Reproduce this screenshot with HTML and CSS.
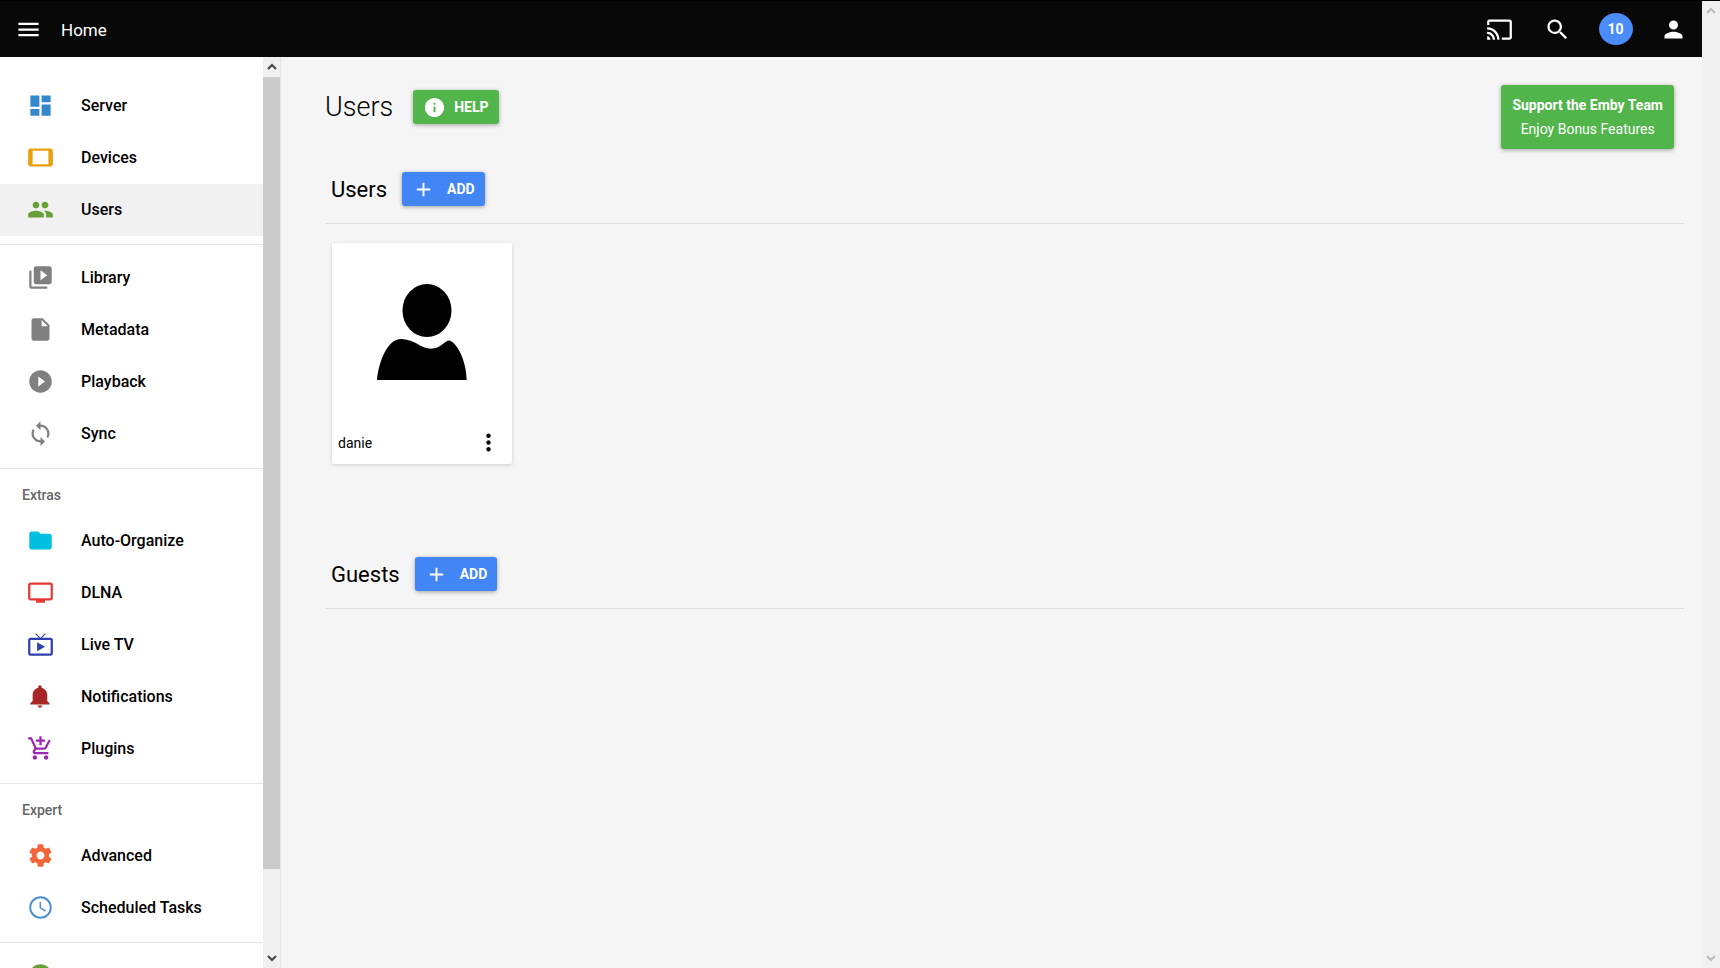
FILE: index.html
```
<!DOCTYPE html>
<html lang="en">
<head>
    <meta charset="UTF-8">
    <meta name="viewport" content="width=device-width, initial-scale=1.0">
    <title>Users</title>
    <link rel="stylesheet" href="styles.css">
</head>
<body>
    <div class="app">
        <header class="topbar">
            <button class="iconbtn" aria-label="Menu"><svg class="icon" viewBox="0 0 24 24"><path d="M3 18h18v-2H3v2zm0-5h18v-2H3v2zm0-7v2h18V6H3z"/></svg></button>
            <a class="title" href="#">Home</a>
            <div class="actions">
                <button class="iconbtn" aria-label="Cast"><svg class="icon" viewBox="0 0 24 24"><path d="M21 3H3c-1.100 0-2 .9-2 2v3h2V5h18v14h-7v2h7c1.100 0 2-.9 2-2V5c0-1.100-.9-2-2-2zM1 18v3h3c0-1.660-1.340-3-3-3zm0-4v2c2.760 0 5 2.240 5 5h2c0-3.870-3.130-7-7-7zm0-4v2c4.970 0 9 4.030 9 9h2c0-6.080-4.930-11-11-11z"/></svg></button>
                <button class="iconbtn" aria-label="Search"><svg class="icon" viewBox="0 0 24 24"><path d="M15.500 14h-.79l-.28-.27A6.471 6.471 0 0 0 16 9.500 6.500 6.500 0 1 0 9.500 16c1.610 0 3.090-.59 4.230-1.570l.27.28v.79l5 4.990L20.490 19l-4.990-5zm-6 0C7.010 14 5 11.990 5 9.500S7.010 5 9.500 5 14 7.010 14 9.500 11.990 14 9.500 14z"/></svg></button>
                <button class="iconbtn"><span class="count">10</span></button>
                <button class="iconbtn" aria-label="Profile"><svg class="icon" viewBox="0 0 24 24"><path d="M12 12c2.210 0 4-1.790 4-4s-1.790-4-4-4-4 1.790-4 4 1.790 4 4 4zm0 2c-2.670 0-8 1.340-8 4v2h16v-2c0-2.660-5.330-4-8-4z"/></svg></button>
            </div>
        </header>

        <div class="body">
            <nav class="sidebar">
                <a class="item server" href="#"><svg class="icon" viewBox="0 0 24 24"><path d="M3 13h8V3H3v10zm0 8h8v-6H3v6zm10 0h8V11h-8v10zm0-18v6h8V3h-8z"/></svg>Server</a>
                <a class="item devices" href="#"><svg class="icon" viewBox="0 0 24 24"><path d="M21 4H3c-1.100 0-2 .9-2 2v12c0 1.100.9 2 2 2h18c1.100 0 2-.9 2-2V6c0-1.100-.9-2-2-2zm-2 14H5V6h14v12z"/></svg>Devices</a>
                <a class="item users active" href="#"><svg class="icon" viewBox="0 0 24 24"><path d="M16 11c1.660 0 2.990-1.340 2.990-3S17.660 5 16 5s-3 1.340-3 3 1.340 3 3 3zm-8 0c1.660 0 2.990-1.340 2.990-3S9.660 5 8 5 5 6.340 5 8s1.340 3 3 3zm0 2c-2.330 0-7 1.170-7 3.500V19h14v-2.500c0-2.330-4.670-3.500-7-3.500zm8 0c-.29 0-.62.020-.97.050 1.160.84 1.970 1.970 1.970 3.450V19h6v-2.500c0-2.330-4.670-3.500-7-3.500z"/></svg>Users</a>
                <hr>
                <a class="item" href="#"><svg class="icon" viewBox="0 0 24 24"><path d="M4 6H2v14c0 1.100.9 2 2 2h14v-2H4V6zm16-4H8c-1.100 0-2 .9-2 2v12c0 1.100.9 2 2 2h12c1.100 0 2-.9 2-2V4c0-1.100-.9-2-2-2zm-8 12.500v-9l6 4.500-6 4.500z"/></svg>Library</a>
                <a class="item" href="#"><svg class="icon" viewBox="0 0 24 24"><path d="M6 2c-1.100 0-1.990.9-1.990 2L4 20c0 1.100.89 2 1.990 2H18c1.100 0 2-.9 2-2V8l-6-6H6zm7 7V3.500L18.500 9H13z"/></svg>Metadata</a>
                <a class="item" href="#"><svg class="icon" viewBox="0 0 24 24"><path d="M12 2C6.480 2 2 6.480 2 12s4.480 10 10 10 10-4.480 10-10S17.520 2 12 2zm-2 14.500v-9l6 4.500-6 4.500z"/></svg>Playback</a>
                <a class="item" href="#"><svg class="icon" viewBox="0 0 24 24"><path d="M12 4V1L8 5l4 4V6c3.310 0 6 2.690 6 6 0 1.010-.25 1.970-.7 2.800l1.460 1.460A7.930 7.930 0 0 0 20 12c0-4.420-3.580-8-8-8zm0 14c-3.310 0-6-2.690-6-6 0-1.010.25-1.970.7-2.800L5.240 7.740A7.930 7.930 0 0 0 4 12c0 4.420 3.580 8 8 8v3l4-4-4-4v3z"/></svg>Sync</a>
                <hr>
                <h3>Extras</h3>
                <a class="item organize" href="#"><svg class="icon" viewBox="0 0 24 24"><path d="M10 4H4c-1.100 0-1.990.9-1.990 2L2 18c0 1.100.9 2 2 2h16c1.100 0 2-.9 2-2V8c0-1.100-.9-2-2-2h-8l-2-2z"/></svg>Auto-Organize</a>
                <a class="item dlna" href="#"><svg class="icon" viewBox="0 0 24 24"><path d="M21 3H3c-1.100 0-2 .9-2 2v12c0 1.100.9 2 2 2h5v2h8v-2h5c1.100 0 1.990-.9 1.990-2L23 5c0-1.100-.9-2-2-2zm0 14H3V5h18v12z"/></svg>DLNA</a>
                <a class="item livetv" href="#"><svg class="icon" viewBox="0 0 24 24"><path d="M21 6h-7.590l3.290-3.290L16 2l-4 4-4-4-.7.71L10.590 6H3c-1.100 0-2 .89-2 2v12c0 1.100.9 2 2 2h18c1.100 0 2-.9 2-2V8c0-1.110-.9-2-2-2zm0 14H3V8h18v12zM9 10v8l7-4z"/></svg>Live TV</a>
                <a class="item notify" href="#"><svg class="icon" viewBox="0 0 24 24"><path d="M11.500 22c1.100 0 2-.9 2-2h-4c0 1.100.9 2 2 2zm6.500-6v-5.500c0-3.070-2.130-5.640-5-6.320V3.500c0-.83-.67-1.500-1.500-1.500S10 2.670 10 3.500v.68c-2.870.68-5 3.250-5 6.320V16l-2 2v1h17v-1l-2-2z"/></svg>Notifications</a>
                <a class="item plugins" href="#"><svg class="icon" viewBox="0 0 24 24"><path d="M11 9h2V6h3V4h-3V1h-2v3H8v2h3v3zm-4 9c-1.100 0-1.990.9-1.990 2S5.900 22 7 22s2-.9 2-2-.9-2-2-2zm10 0c-1.100 0-1.990.9-1.990 2s.89 2 1.990 2 2-.9 2-2-.9-2-2-2zm-9.830-3.250l.03-.12.9-1.630h7.450c.75 0 1.410-.41 1.750-1.030l3.860-7.010L19.420 4h-.01l-1.100 2-2.760 5H8.530l-.13-.27L6.160 6l-.95-2-.94-2H1v2h2l3.600 7.590-1.350 2.450c-.16.28-.25.61-.25.960 0 1.100.9 2 2 2h12v-2H7.420c-.13 0-.25-.11-.25-.25z"/></svg>Plugins</a>
                <hr>
                <h3>Expert</h3>
                <a class="item advanced" href="#"><svg class="icon" viewBox="0 0 24 24"><path d="M19.430 12.980c.04-.32.07-.64.07-.98s-.03-.66-.07-.98l2.110-1.650c.19-.15.24-.42.12-.64l-2-3.460c-.12-.22-.39-.3-.61-.22l-2.490 1c-.52-.4-1.080-.73-1.690-.98l-.38-2.650A.488.488 0 0 0 14 2h-4c-.25 0-.46.18-.49.42l-.38 2.650c-.61.25-1.170.59-1.690.98l-2.490-1c-.23-.09-.49 0-.61.22l-2 3.460c-.13.22-.07.49.12.64l2.110 1.650c-.04.32-.07.65-.07.98s.03.66.07.98l-2.110 1.650c-.19.15-.24.42-.12.64l2 3.460c.12.22.39.3.61.22l2.490-1c.52.4 1.080.73 1.690.98l.38 2.650c.03.24.24.42.49.42h4c.25 0 .46-.18.49-.42l.38-2.650c.61-.25 1.170-.59 1.690-.98l2.490 1c.23.09.49 0 .61-.22l2-3.460c.12-.22.07-.49-.12-.64l-2.110-1.650zM12 15.500c-1.930 0-3.500-1.570-3.500-3.500s1.570-3.500 3.500-3.500 3.500 1.570 3.500 3.500-1.570 3.500-3.500 3.500z"/></svg>Advanced</a>
                <a class="item tasks" href="#"><svg class="icon" viewBox="0 0 24 24"><path d="M12 2a10 10 0 1 0 0 20 10 10 0 0 0 0-20zm0 18.300a8.300 8.300 0 1 1 0-16.600 8.300 8.300 0 0 1 0 16.600zM12.500 7h-1.300v5.700l5 3 .7-1.200-4.400-2.600z"/></svg>Scheduled Tasks</a>
                <hr>
                <a class="item help" href="#" aria-label="Help"><svg class="icon" viewBox="0 0 24 24"><circle cx="12" cy="12" r="10"/></svg></a>
            </nav>
            <div class="scroll side">
                <svg class="arrow" viewBox="0 0 10 10"><path d="M1 7l4-4 4 4"/></svg>
                <div class="thumb"></div>
                <div class="track"></div>
                <svg class="arrow" viewBox="0 0 10 10"><path d="M1 3l4 4 4-4"/></svg>
            </div>

            <main class="content">
                <div class="head">
                    <div class="row">
                        <h1>Users</h1>
                        <button class="btn green"><svg class="icon" viewBox="0 0 24 24"><path d="M12 2C6.480 2 2 6.480 2 12s4.480 10 10 10 10-4.480 10-10S17.520 2 12 2zm1 15h-2v-6h2v6zm0-8h-2V7h2v2z"/></svg>HELP</button>
                    </div>
                    <button class="support green"><b>Support the Emby Team</b><span>Enjoy Bonus Features</span></button>
                </div>

                <section>
                    <div class="row line">
                        <h2>Users</h2>
                        <button class="btn blue"><svg class="icon" viewBox="0 0 24 24"><path d="M19 13h-6v6h-2v-6H5v-2h6V5h2v6h6v2z"/></svg>ADD</button>
                    </div>
                    <div class="cards">
                        <div class="card">
                            <svg class="avatar" viewBox="0 0 180 180"><ellipse cx="95" cy="67.500" rx="24.500" ry="26.500"/><path d="M45 137C47 117 56 96 69 96c13 0 20 9.700 30 9.700 10 0 14-8.200 18-8.200 5 0 17 15 17.700 39.500z"/></svg>
                            <div class="foot">
                                <span>danie</span>
                                <button class="more" aria-label="More"><svg class="icon" viewBox="0 0 24 24"><path d="M12 8c1.100 0 2-.9 2-2s-.9-2-2-2-2 .9-2 2 .9 2 2 2zm0 2c-1.100 0-2 .9-2 2s.9 2 2 2 2-.9 2-2-.9-2-2-2zm0 6c-1.100 0-2 .9-2 2s.9 2 2 2 2-.9 2-2-.9-2-2-2z"/></svg></button>
                            </div>
                        </div>
                    </div>
                </section>

                <section>
                    <div class="row line">
                        <h2>Guests</h2>
                        <button class="btn blue"><svg class="icon" viewBox="0 0 24 24"><path d="M19 13h-6v6h-2v-6H5v-2h6V5h2v6h6v2z"/></svg>ADD</button>
                    </div>
                </section>
            </main>
        </div>
    </div>
    <div class="scroll page">
        <svg class="arrow" viewBox="0 0 10 10"><path d="M1 7l4-4 4 4"/></svg>
        <svg class="arrow" viewBox="0 0 10 10"><path d="M1 3l4 4 4-4"/></svg>
    </div>
</body>
</html>
```
FILE: styles.css
```
*{margin:0px;padding:0px;box-sizing:border-box;}

body{display:flex;height:100vh;overflow:hidden;background:#f5f5f5;color:#000;font-family:Roboto, Arial, sans-serif;font-size:16px;}

button{border:0;background:none;color:inherit;font-family:inherit;cursor:pointer;}

a{color:inherit;text-decoration:none;}

.icon{width:27px;height:27px;fill:currentColor;flex:none;}

.app{flex:1;min-width:0;display:flex;flex-direction:column;}

.topbar{height:57px;flex:none;display:flex;align-items:center;background:#080808;border-top:1px solid #000;color:#fff;}

.iconbtn{width:57px;height:56px;display:flex;align-items:center;justify-content:center;}

.title{font-size:17px;padding-left:4px;padding-top:1px;}

.actions{display:flex;margin-left:auto;gap:1px;}

.count{width:34px;height:32px;border-radius:50%;background:#4b8cfb;font-size:14px;font-weight:700;line-height:32px;}

.body{flex:1;min-height:0;display:flex;}

/* left menu */
.sidebar{width:263px;flex:none;background:#fff;padding-top:23px;overflow:hidden;}

.item{display:flex;align-items:center;gap:27px;height:52px;padding:0 0 2px 27px;font-weight:500;}

.item .icon{color:#808080;}

.active{background:#f1f1f1;}

.sidebar hr{border:0;border-top:1px solid #e3e3e3;margin:8px 0 7px;}

.sidebar h3{height:39px;line-height:39px;padding-left:22px;font-size:14px;font-weight:500;color:#666;}

.server .icon{color:#3388cc;}
.devices .icon{color:#eaa10c;}
.users .icon,.help .icon{color:#689f38;}
.organize .icon{color:#00bfe0;}
.dlna .icon{color:#e53935;}
.livetv .icon{color:#303fb0;}
.notify .icon{color:#a92626;}
.plugins .icon{color:#9c27b0;}
.advanced .icon{color:#f2663a;}
.tasks .icon{color:#4a90d0;}

.scroll{width:18px;flex:none;display:flex;flex-direction:column;background:#f0f0f0;}

.arrow{width:10px;height:20px;margin:0 auto;flex:none;fill:none;stroke:#444;stroke-width:2;}

.side{border-right:1px solid #e4e4e4;}

.thumb{flex:90;background:#cbcbcb;}

.track{flex:9;}

.page{justify-content:space-between;border-top:1px solid #000;}

.page .arrow{stroke:#bbb;}

/* main area */
.content{flex:1;min-width:0;padding:28px 18px 0 44px;}

.head{display:flex;align-items:flex-start;justify-content:space-between;padding:0 10px 23px 0;}

.head .row{padding-top:5px;gap:20px;}

.row{display:flex;align-items:center;}

h1{font-size:27px;font-weight:300;}

h2{font-size:22px;font-weight:400;}

.line{gap:15px;padding:0 0 17px 6px;border-bottom:1px solid #dcdcdc;}

.btn{height:34px;display:flex;align-items:center;padding:0 10px;border-radius:3px;color:#fff;font-size:14px;font-weight:700;box-shadow:0 1px 4px rgba(0,0,0,.35);}

.btn .icon{width:23px;height:23px;}

.green{background:#52b54b;}

.green .icon{margin-right:8px;}

.blue{background:#4285f4;}

.blue .icon{margin-right:12px;}

.support{display:flex;flex-direction:column;gap:2px;padding:9px 11px;border-radius:3px;color:#fff;font-size:14px;line-height:22px;text-align:center;box-shadow:0 1px 4px rgba(0,0,0,.35);}

.support span{width:100%;}

.cards{display:flex;padding:19px 0 93px 7px;}

.card{width:180px;background:#fff;border-radius:2px;box-shadow:0 1px 4px rgba(0,0,0,.15);}

.avatar{display:block;width:100%;}

.foot{display:flex;align-items:center;justify-content:space-between;height:41px;padding:0 10px 2px 6px;font-size:14px;}

.more{display:flex;}
```
